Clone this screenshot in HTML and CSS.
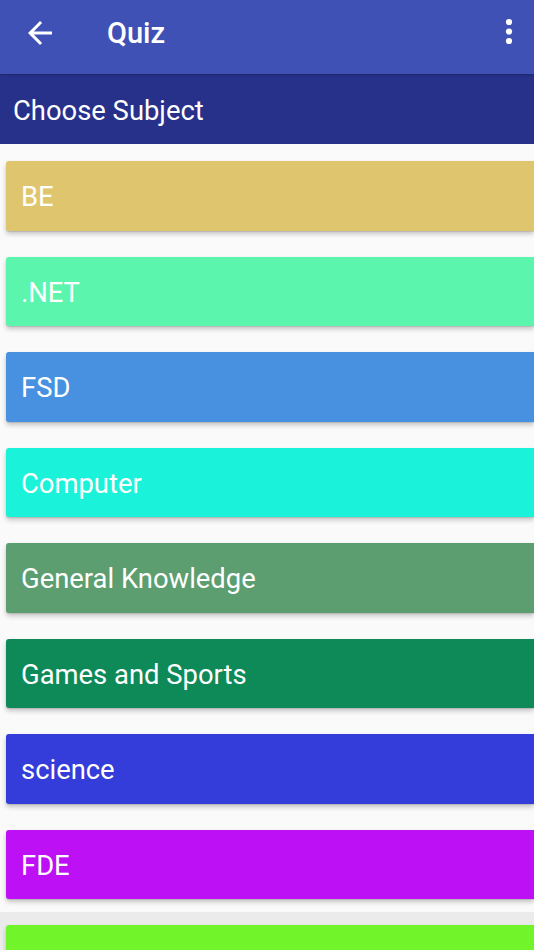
FILE: index.html
```html
<!DOCTYPE html>
<html lang="en">
<head>
<meta charset="utf-8">
<title>Quiz</title>
<link rel="stylesheet" href="styles.css">
</head>
<body>
<div class="screen">
  <header class="appbar">
    <button class="icon-btn back" aria-label="Back">
      <svg width="36" height="36" viewBox="0 0 24 24"><path d="M20 11H7.83l5.59-5.59L12 4l-8 8 8 8 1.41-1.41L7.83 13H20v-2z" fill="#fff"/></svg>
    </button>
    <h1 class="title">Quiz</h1>
    <button class="icon-btn more" aria-label="More options">
      <svg width="8" height="28" viewBox="0 0 8 28"><circle cx="4" cy="4" r="3.1" fill="#fff"/><circle cx="4" cy="13.5" r="3.1" fill="#fff"/><circle cx="4" cy="23" r="3.1" fill="#fff"/></svg>
    </button>
  </header>
  <div class="subbar">Choose Subject</div>
  <main class="list">
    <div class="card c-be">BE</div>
    <div class="card c-net">.NET</div>
    <div class="card c-fsd">FSD</div>
    <div class="card c-comp">Computer</div>
    <div class="card c-gk">General Knowledge</div>
    <div class="card c-games">Games and Sports</div>
    <div class="card c-sci">science</div>
    <div class="card c-fde">FDE</div>
    <div class="card c-last"></div>
  </main>
</div>
</body>
</html>
```
FILE: styles.css
```css
html, body {
  margin: 0;
  padding: 0;
}
body {
  background: #ebebeb;
  font-family: Roboto, "Noto Sans", "Liberation Sans", sans-serif;
  color: #fff;
  overflow: hidden;
}
.screen {
  width: 534px;
  height: 950px;
  overflow: hidden;
}
.appbar {
  height: 74px;
  background: #3f51b5;
  display: flex;
  align-items: center;
  position: relative;
  z-index: 2;
  box-shadow: 0 1px 2px rgba(0,0,0,0.25);
}
.icon-btn {
  background: none;
  border: 0;
  padding: 0;
  display: flex;
  align-items: center;
  justify-content: center;
}
.back {
  width: 36px;
  height: 36px;
  margin-left: 22px;
  margin-top: -8px;
}
.title {
  margin: 0 0 0 49px;
  font-size: 29px;
  font-weight: 500;
  margin-top: -9px;
  flex: 1;
}
.more {
  margin-right: 21px;
  margin-top: -10px;
}
.subbar {
  height: 70px;
  background: #28318a;
  font-size: 27.4px;
  padding-left: 13px;
  display: flex;
  align-items: center;
  box-sizing: border-box;
  padding-top: 4px;
}
.list {
  height: 768px;
  background: #fafafa;
  padding-top: 17px;
  box-sizing: border-box;
  display: flex;
  flex-direction: column;
  gap: 26px;
}
.card {
  flex: none;
  height: 69.5px;
  width: 528px;
  margin-left: 6px;
  border-radius: 3px 0 0 3px;
  box-shadow: 0 3px 5px rgba(0,0,0,0.22), 0 1px 1px rgba(0,0,0,0.1);
  font-size: 27.4px;
  padding-left: 15px;
  padding-top: 3px;
  box-sizing: border-box;
  display: flex;
  align-items: center;
}
.c-be { background: #dfc66e; }
.c-net { background: #5cf5ae; }
.c-fsd { background: #4890e0; }
.c-comp { background: #1af3da; }
.c-gk { background: #5c9e70; }
.c-games { background: #0e8a58; }
.c-sci { background: #343cd9; }
.c-fde { background: #be10f5; }
.c-last { background: #72f42a; }
```
